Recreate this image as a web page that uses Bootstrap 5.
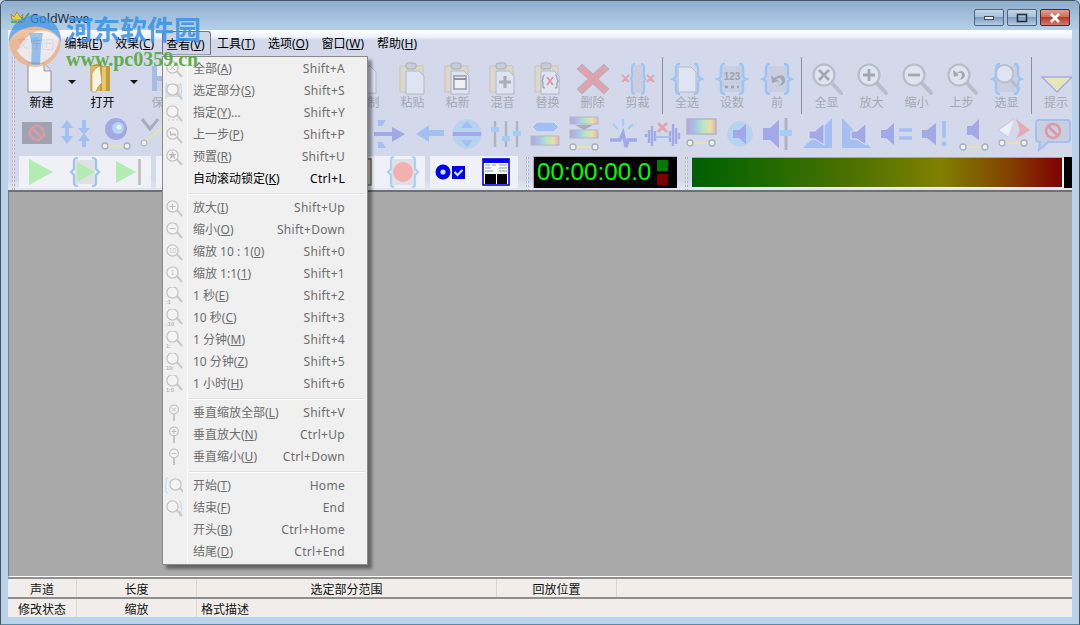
<!DOCTYPE html>
<html lang="zh-CN">
<head>
<meta charset="UTF-8" />
<title>GoldWave</title>
<link href="https://cdn.jsdelivr.net/npm/bootstrap@5.3.0/dist/css/bootstrap.min.css" rel="stylesheet" />
<style>
  html, body { width: 1080px; height: 625px; overflow: hidden; background: #b9d3ec; }
  body { font: 12px/16px "Noto Sans", "Noto Sans CJK SC", sans-serif; color: #000; }
  .gw-window { width: 1080px; height: 625px; padding: 0 7px 7px 7px; border: 1px solid #47535f; border-bottom-color: #5b8aa0; border-radius: 6px 6px 0 0; background: #b9d3ec; box-sizing: border-box; margin: 0; }
  .gw-title { height: 29px; flex: none; color: #1d2f40; font-size: 12.5px; background: linear-gradient(#8fadcd, #b5d0e9); margin: 0 -7px; padding: 5px 9px 0 9px; border-radius: 5px 5px 0 0; }
  .gw-title-text { padding-top: 5px; }
  .gw-winbtn { width: 30px; height: 17px; margin: 3px 0 0 3px; border: 1px solid #4e6478; border-radius: 2px; background: linear-gradient(#c3d6e9 0, #a9c1da 45%, #7d9dbd 50%, #b5cde4 100%); }
  .gw-close { background: linear-gradient(#e0a093 0, #cf6d5e 45%, #b63a2a 50%, #d37a68 100%); border-color: #4f2a2a; }
  .gw-client { background: #d3d9eb; min-height: 0; }
  .gw-menubar { height: 26px; flex: none; padding-left: 2.5px; background: linear-gradient(#fff 0, #eef1f8 28%, #d3d9eb 38%); }
  .gw-menubar span { padding: 5px 6.5px 0; height: 24px; margin-top: 1px; line-height: 16px; white-space: nowrap; }
  .gw-menubar .gw-dim { color: #9b9b9b; padding-right: 3.5px; }
  .gw-menubar .gw-open { margin: 1px 0 0 1.5px; padding: 5px 5px 0 3px; border: 1px solid #6f7480; border-bottom-color: #9a9ea8; border-radius: 3px 3px 0 0; background: #cfd5e6; }
  .gw-grip { flex: none; width: 3px; margin: 0 4px 0 4px; align-self: stretch; background: radial-gradient(circle, #fff 0.9px, #8e94a3 1.2px, transparent 1.5px) 0 0 / 3px 4px repeat-y; }
  .gw-grip-time { margin: 1px 4px 0 8px; }
  .gw-row1 { height: 59px; flex: none; overflow: hidden; }
  .gw-tool { flex: none; width: 45px; padding-top: 5px; text-align: center; color: #a6a8b2; white-space: nowrap; }
  .gw-tool svg { display: block; width: 36px; height: 36px; margin: 0 auto; }
  .gw-tool div { margin-top: -2px; }
  .gw-tool.gw-on { color: #000; }
  .gw-drop { flex: none; width: 16px; padding: 24px 0 0 4px; }
  .gw-drop-b { padding-left: 5px; }
  .gw-drop i { display: block; width: 0; border: 4px solid transparent; border-top: 4px solid #111; }
  .gw-sep { flex: none; width: 1px; height: 57px; margin: 1px 1.75px; background: #8b8f99; }
  .gw-gap-edit { flex: none; width: 159px; }
  .gw-row2 { height: 40px; flex: none; }
  .gw-row2 svg { flex: none; width: 39px; height: 36px; margin-top: 1px; }
  .gw-gap195 { flex: none; width: 195px; }
  .gw-row3 { height: 35px; flex: none; background: linear-gradient(#d3d9eb 70%, #e4e8f3); }
  .gw-panel { height: 32px; margin-top: 1px; background: #eff1f6; flex: none; }
  .gw-panel svg { flex: none; width: 44px; height: 32px; }
  .gw-p1 { width: 132px; } .gw-p2 { width: 269px; margin-left: 5px; } .gw-p3 { width: 88px; margin-left: 5px; }
  .gw-time { flex: none; width: 144px; height: 32px; margin-top: 1px; background: #000; border: 1px solid #a8a8a8; border-width: 1px 0 0 1px; color: #0f0; font: 24.2px/30px "Liberation Sans", sans-serif; padding: 0 9px 0 3px; }
  .gw-lamp { width: 11px; height: 11px; margin-top: 3px; background: #007b00; }
  .gw-lamp-r { background: #7b0000; }
  .gw-meter { flex: none; width: 372px; height: 31px; margin-top: 2px; background: linear-gradient(90deg, #005f00 0, #1f6a00 20%, #4f7200 45%, #808000 67%, #824400 85%, #800000 100%); border: 1px solid #a8a8a8; border-width: 1px 1px 1px 0; border-right: 2px solid #fff; border-bottom-color: #fff; }
  .gw-tail { flex: 1 1 auto; height: 31px; margin-top: 2px; background: #000; }
  .gw-work { background: #a9a9a9; border-top: 2px solid #6f7075; border-left: 1px solid #7c7f84; border-bottom: 1px solid #fff; min-height: 0; }
  .gw-status { flex: none; background: #f0edeb; color: #111; }
  .gw-status > div { height: 18px; border-top: 2px solid #8f8f8f; box-sizing: content-box; overflow: hidden; }
  .gw-status span { flex: none; height: 18px; padding-top: 5px; line-height: 12px; border-right: 1px solid #d9d6d4; white-space: nowrap; }
  .gw-s1 { width: 69px; } .gw-s2 { width: 120px; } .gw-s3 { width: 300px; } .gw-s4 { width: 120px; }
  .gw-menu { position: absolute; left: 161px; top: 55px; width: 206px; height: 509px; padding: 1px 0 0; background: #f0f0f0; border: 1px solid #8a8a8a; border-radius: 0; box-shadow: 4px 4px 3px rgba(0,0,0,.4); z-index: 5; display: block; min-width: 0; font-size: 12px; }
  .gw-menu::before { content: ""; position: absolute; left: 24px; top: 0; bottom: 0; width: 1px; background: #e2e3e3; border-right: 1px solid #fff; }
  .gw-menu .dropdown-item { display: flex; height: 22px; align-items: center; padding: 0 22px 0 30px; color: #6d6d6d; position: relative; font-size: 12px; background: none; }
  .gw-menu .dropdown-item.gw-on { color: #000; }
  .gw-menu .dropdown-item > span:last-child { letter-spacing: .3px; }
  .gw-menu .dropdown-item svg { position: absolute; left: 2px; top: 2px; width: 18px; height: 18px; }
  .gw-menu .dropdown-divider { margin: 3px 2px 2px 26px; height: 2px; border-top: 1px solid #e0e0e0; border-bottom: 1px solid #fff; opacity: 1; }
  .gw-mark { position: absolute; left: 0; top: 0; z-index: 9; pointer-events: none; }
  .gw-mark-logo { position: absolute; left: 6px; top: 12px; opacity: .72; }
  .gw-mark-cn { position: absolute; left: 65px; top: 11px; font: 700 27px/34px "Noto Sans CJK SC", sans-serif; color: #3a94e6; opacity: .88; white-space: nowrap; }
  .gw-mark-en { position: absolute; left: 65px; top: 47px; font: 700 20px/22px "Liberation Serif", serif; color: #55a83a; opacity: .9; white-space: nowrap; }
</style>
</head>
<body>
<svg width="0" height="0" class="position-absolute">
  <defs>
    <symbol id="br" viewBox="0 0 36 36"><path d="M11 3Q7 3 7 7v7q0 3-3 4 3 1 3 4v7q0 4 4 4M25 3q4 0 4 4v7q0 3 3 4-3 1-3 4v7q0 4-4 4" fill="none" stroke="#9cc4f5" stroke-width="2.4"/></symbol>
    <symbol id="clip" viewBox="0 0 36 36"><rect x="5" y="5" width="23" height="26" fill="#dcd8cb" stroke="#c8c4b6"/><rect x="11" y="2" width="10" height="6" rx="2" fill="#c9ccd6" stroke="#a9adb8"/><path d="M11 10h13l5 5v18H11z" fill="#dfe4f2" stroke="#b4b8c6"/></symbol>
    <symbol id="mag" viewBox="0 0 36 36"><path d="M22 21l10 11" stroke="#b9bdc9" stroke-width="4" stroke-linecap="round"/><circle cx="15" cy="14" r="10.5" fill="#dfe4f1" stroke="#b9bdc9" stroke-width="2.2"/></symbol>
    <symbol id="mm" viewBox="0 0 18 18"><path d="M11 10l6 7" stroke="#c9c9c9" stroke-width="2"/><circle cx="7.5" cy="7.5" r="5.6" fill="#f4f4f4" stroke="#c4c4c4" stroke-width="1.3"/></symbol>
    <symbol id="mv" viewBox="0 0 18 18"><circle cx="9" cy="5.5" r="4.4" fill="#f4f4f4" stroke="#c4c4c4" stroke-width="1.3"/><path d="M9 10v7" stroke="#c4c4c4" stroke-width="2"/></symbol>
    <symbol id="link" viewBox="0 0 36 36"><path d="M9 31h18" stroke="#e4e3b0" stroke-width="2"/><circle cx="7" cy="31" r="3" fill="#eef0f6" stroke="#a9adb8" stroke-width="1.3"/><circle cx="29" cy="31" r="3" fill="#eef0f6" stroke="#a9adb8" stroke-width="1.3"/></symbol>
    <linearGradient id="rb" x1="0" x2="1" y1="0" y2="0"><stop offset="0" stop-color="#b4a6d8"/><stop offset=".3" stop-color="#a8c6ee"/><stop offset=".55" stop-color="#b8e6c0"/><stop offset=".8" stop-color="#e6e0a8"/><stop offset="1" stop-color="#e6b4a8"/></linearGradient>
  </defs>
</svg>

<div class="gw-window d-flex flex-column position-relative">
  <div class="gw-title d-flex align-items-start">
    <svg width="20" height="16" viewBox="0 0 20 16" class="mt-1 flex-none"><path d="M1 4l3 3 3-5 3 5 3-3-1 6H2z" fill="#e8d43a" stroke="#7b7320" stroke-width=".6"/><path d="M11 7l3 3 5-7" fill="none" stroke="#3f9a4a" stroke-width="1.6"/><path d="M1 12h6" stroke="#2fae36" stroke-width="1.6"/><path d="M8 12h5" stroke="#d9363a" stroke-width="1.6"/><path d="M14 12h5" stroke="#d9c23a" stroke-width="1.6"/></svg>
    <span class="flex-grow-1 gw-title-text">GoldWave</span>
    <div class="gw-winbtn d-flex align-items-center justify-content-center"><svg width="12" height="7" viewBox="0 0 12 7"><rect x="1.500" y="2.500" width="9" height="3" fill="#e9eef4" stroke="#3f4b58"/></svg></div>
    <div class="gw-winbtn d-flex align-items-center justify-content-center"><svg width="12" height="10" viewBox="0 0 12 10"><rect x="1.500" y="1.500" width="9" height="7" fill="none" stroke="#28313a" stroke-width="1.600"/></svg></div>
    <div class="gw-winbtn gw-close d-flex align-items-center justify-content-center"><svg width="12" height="10" viewBox="0 0 12 10"><path d="M2 1l8 8M10 1L2 9" stroke="#fff" stroke-width="2.600"/></svg></div>
  </div>

  <div class="gw-client d-flex flex-column flex-grow-1">
    <div class="gw-menubar d-flex">
      <span class="gw-dim">文件(<u>F</u>)</span>
      <span>编辑(<u>E</u>)</span>
      <span>效果(<u>C</u>)</span>
      <span class="gw-open">查看(<u>V</u>)</span>
      <span>工具(<u>T</u>)</span>
      <span>选项(<u>O</u>)</span>
      <span>窗口(<u>W</u>)</span>
      <span>帮助(<u>H</u>)</span>
    </div>

    <div class="gw-row1 d-flex">
      <div class="gw-grip"></div>
      <div class="gw-tool gw-on"><svg viewBox="0 0 36 36"><path d="M4 2h16l7 8v21H4z" fill="#f6f6f6" stroke="#8a8a8a"/><path d="M20 2v8h7" fill="#dcdcdc" stroke="#9a9a9a"/></svg><div>新建</div></div>
      <div class="gw-drop"><i></i></div>
      <div class="gw-tool gw-on"><svg viewBox="0 0 36 36"><path d="M5 5l10-3 3 3h7v25H12l-7 0z" fill="#c59a3c"/><path d="M5 5h10v25H5z" fill="#dcb45c"/><path d="M7 12q4-6 8-7l2 17q-4 2-6 9H7z" fill="#f8f4e2" stroke="#a08850" stroke-width=".6"/><path d="M17 6l4-1v24l-4 2z" fill="#e8c66a"/></svg><div>打开</div></div>
      <div class="gw-drop gw-drop-b"><i></i></div>
      <div class="gw-tool"><svg viewBox="0 0 36 36"><rect x="6" y="5" width="25" height="25" fill="#a8bce0"/><rect x="11" y="5" width="15" height="10" fill="#e8ecf6"/><rect x="11" y="20" width="15" height="10" fill="#c9d2e6"/></svg><div>保存</div></div>
      <div class="gw-gap-edit"></div>
      <div class="gw-tool"><svg viewBox="0 0 36 36"><path d="M6 5h14l6 6v21H6z" fill="#dfe4f2" stroke="#b4b8c6"/></svg><div>复制</div></div>
      <div class="gw-tool"><svg viewBox="0 0 36 36"><use href="#clip"/></svg><div>粘贴</div></div>
      <div class="gw-tool"><svg viewBox="0 0 36 36"><use href="#clip"/><rect x="14" y="15" width="12" height="13" fill="#eef0f6" stroke="#8e929c" stroke-width="1.3"/><path d="M14 18h12" stroke="#8e929c" stroke-width="2"/></svg><div>粘新</div></div>
      <div class="gw-tool"><svg viewBox="0 0 36 36"><use href="#clip"/><path d="M20 15v12M14 21h12" stroke="#a9adb4" stroke-width="3.2"/></svg><div>混音</div></div>
      <div class="gw-tool"><svg viewBox="0 0 36 36"><use href="#clip"/><path d="M17 16l6 8M23 16l-6 8" stroke="#dd9aa4" stroke-width="2"/><path d="M15 14q-2 0-2 2v2l-1 2 1 2v3q0 2 2 2M25 14q2 0 2 2v2l1 2-1 2v3q0 2-2 2" fill="none" stroke="#9a9ea8" stroke-width="1.2"/></svg><div>替换</div></div>
      <div class="gw-tool"><svg viewBox="0 0 36 36"><path d="M7 3l11 10L29 3l5 5-11 10 11 10-5 5-11-10L7 33l-5-5 11-10L2 8z" fill="#dba4ae" stroke="#b8b4bc"/></svg><div>删除</div></div>
      <div class="gw-tool"><svg viewBox="0 0 36 36"><rect x="12" y="4" width="12" height="28" fill="#c9cfe0"/><path d="M15 3q-3 0-3 3v9l-1 3 1 3v9q0 3 3 3M21 3q3 0 3 3v9l1 3-1 3v9q0 3-3 3" fill="none" stroke="#9cc4f5" stroke-width="2.2"/><path d="M2 14l7 7M9 14l-7 7M27 14l7 7M34 14l-7 7" stroke="#e0a6b0" stroke-width="2.2"/></svg><div>剪裁</div></div>
      <div class="gw-sep"></div>
      <div class="gw-tool"><svg viewBox="0 0 36 36"><path d="M9 6h13l5 5v20H9z" fill="#dfe4f2" stroke="#b4b8c6"/><use href="#br"/></svg><div>全选</div></div>
      <div class="gw-tool"><svg viewBox="0 0 36 36"><rect x="8" y="5" width="20" height="26" fill="#c9cfe0"/><use href="#br"/><text x="18" y="19" text-anchor="middle" font-size="10" font-weight="700" fill="#9ea2ae" font-family="Liberation Sans">123</text><path d="M11 26h3M17 26h3M23 26h2" stroke="#9ea2ae" stroke-width="2.4"/></svg><div>设数</div></div>
      <div class="gw-tool"><svg viewBox="0 0 36 36"><rect x="8" y="5" width="20" height="26" fill="#c9cfe0"/><use href="#br"/><path d="M12 14l1 8 7-2-3-2q5-3 6 2 0 3-4 5 8-1 7-7-2-7-11-1z" fill="#a3a7b2"/></svg><div>前</div></div>
      <div class="gw-sep"></div>
      <div class="gw-tool"><svg viewBox="0 0 36 36"><use href="#mag"/><path d="M10 9l10 10M20 9L10 19" stroke="#a3a7b2" stroke-width="2.6"/></svg><div>全显</div></div>
      <div class="gw-tool"><svg viewBox="0 0 36 36"><use href="#mag"/><path d="M15 8v12M9 14h12" stroke="#a3a7b2" stroke-width="2.8"/></svg><div>放大</div></div>
      <div class="gw-tool"><svg viewBox="0 0 36 36"><use href="#mag"/><path d="M9 14h12" stroke="#a3a7b2" stroke-width="2.8"/></svg><div>缩小</div></div>
      <div class="gw-tool"><svg viewBox="0 0 36 36"><use href="#mag"/><path d="M9 9l1 7 5-2-2-1q4-3 5 1 0 3-3 5 6-1 6-5-2-7-8-2z" fill="#a3a7b2"/></svg><div>上步</div></div>
      <div class="gw-tool"><svg viewBox="0 0 36 36"><rect x="8" y="5" width="20" height="26" fill="#c9cfe0"/><use href="#mag" x="3" y="1" width="30" height="30"/><use href="#br"/></svg><div>选显</div></div>
      <div class="gw-sep"></div>
      <div class="gw-tool"><svg viewBox="0 0 36 36"><path d="M4 16h30L19 31z" fill="#e6e6b8" stroke="#a8ace8" stroke-width="1.5"/></svg><div>提示</div></div>
    </div>

    <div class="gw-row2 d-flex">
      <div class="gw-grip"></div>
      <svg viewBox="0 0 39 36"><rect x="3" y="6" width="30" height="22" fill="#a0a4b0"/><circle cx="18" cy="17" r="7" fill="none" stroke="#d99aa4" stroke-width="2.6"/><path d="M13 12l10 10" stroke="#d99aa4" stroke-width="2.6"/></svg>
      <svg viewBox="0 0 39 36"><path d="M9 4l-6 8h4v8H3l6 8 6-8h-4v-8h4zM24 4v8h-4l6 7 6-7h-4V4zM26 17l-6 8h4v6h4v-6h4z" fill="#a4c0f3"/></svg>
      <svg viewBox="0 0 39 36"><circle cx="19" cy="13" r="11" fill="#a3a8e6"/><circle cx="21" cy="12" r="6" fill="#b4d4f0"/><circle cx="22" cy="11" r="2.600" fill="#e6eefa"/><use href="#link" x="1" y="-1" width="36" height="36"/></svg>
      <svg viewBox="0 0 39 36"><path d="M6 3l8 10 8-10" fill="none" stroke="#a9adb8" stroke-width="3"/><path d="M8 27L32 6" stroke="#e4e3b0" stroke-width="2"/><circle cx="8" cy="27" r="3" fill="#eef0f6" stroke="#a9adb8"/></svg>
      <div class="gw-gap195"></div>
      <svg viewBox="0 0 39 36"><path d="M8 4h8l-4 6h-4zM8 32h8l-4-6h-4z" fill="#a4c0f3"/><path d="M4 16h18v-5l13 7-13 8v-6H4z" fill="#a3a8e6"/></svg>
      <svg viewBox="0 0 39 36"><path d="M35 14H20V9L7 18l13 8v-6h15z" fill="#a4c0f3"/></svg>
      <svg viewBox="0 0 39 36"><circle cx="19" cy="18" r="14.500" fill="#b4d4f0" stroke="#c8cfe6"/><path d="M5 16h28v4H5z" fill="#a3a8e6"/><path d="M19 5l-6 7h12zM19 31l-6-7h12z" fill="#a4c0f3"/></svg>
      <svg viewBox="0 0 39 36"><path d="M8 5v26M19 5v26M30 5v26" stroke="#b0b4c0" stroke-width="2.400"/><rect x="4" y="11" width="8" height="5" fill="#a4cef3"/><rect x="15" y="20" width="8" height="5" fill="#a4cef3"/><rect x="26" y="15" width="8" height="5" fill="#a4cef3"/></svg>
      <svg viewBox="0 0 39 36"><path d="M11 6h17l5 5-5 5H11l-5-5z" fill="#a4c0f3" stroke="#dfe4f2"/><rect x="5" y="20" width="28" height="9" fill="url(#rb)" stroke="#b4b8c6"/></svg>
      <svg viewBox="0 0 39 36"><rect x="5" y="1" width="28" height="7" fill="url(#rb)" stroke="#b4b8c6"/><path d="M10 9h18l-9 5z" fill="#a9adb8"/><rect x="5" y="14" width="28" height="8" fill="url(#rb)" stroke="#b4b8c6"/><use href="#link" x="1" y="0" width="36" height="36"/></svg>
      <svg viewBox="0 0 39 36"><path d="M6 24h10l3-7 3 14 2-7h9" fill="none" stroke="#a3a8e6" stroke-width="3.400"/><path d="M19 3v7M9 8l5 5M29 8l-5 5" stroke="#a4cef3" stroke-width="2.400"/></svg>
      <svg viewBox="0 0 39 36"><path d="M3 21v-3M6 27V14M9 30V10M12 25V15M27 26V15M30 30V8M33 28V12M36 23v-6" stroke="#a3a8e6" stroke-width="2.400"/><path d="M12 21h16" stroke="#a4c0f3" stroke-width="2"/><path d="M15 7l9 9M24 7l-9 9" stroke="#e0a6b0" stroke-width="2.800"/></svg>
      <svg viewBox="0 0 39 36"><rect x="5" y="3" width="29" height="15" fill="url(#rb)" stroke="#b0b4c0" stroke-width="1.400"/><use href="#link" x="1" y="-4" width="36" height="36"/></svg>
      <svg viewBox="0 0 39 36"><circle cx="19" cy="18" r="12.500" fill="#b4d4f0" stroke="#c8cfe6"/><path d="M12 14h6l7-6v20l-7-6h-6z" fill="#a3a8e6"/></svg>
      <svg viewBox="0 0 39 36"><path d="M3 12h7l9-8v28l-9-8H3z" fill="#a3a8e6"/><path d="M26 2v32" stroke="#b0b4c0" stroke-width="3"/><rect x="20" y="14" width="12" height="6" fill="#a4cef3"/></svg>
      <svg viewBox="0 0 39 36"><path d="M33 2v30H4z" fill="#a4c0f3"/><path d="M10 15h6l9-8v22l-9-6h-6z" fill="#a3a8e6" stroke="#dfe4f2"/></svg>
      <svg viewBox="0 0 39 36"><path d="M4 2v30h29z" fill="#a4c0f3"/><path d="M13 15h6l9-8v22l-9-6h-6z" fill="#a3a8e6" stroke="#dfe4f2"/></svg>
      <svg viewBox="0 0 39 36"><path d="M4 14h5l8-7v22l-8-7H4z" fill="#a3a8e6"/><path d="M22 14h13M22 22h13" stroke="#a4c0f3" stroke-width="3.400"/></svg>
      <svg viewBox="0 0 39 36"><path d="M6 14h5l9-7v22l-9-7H6z" fill="#a3a8e6"/><path d="M28 5v17" stroke="#a4c0f3" stroke-width="3.600"/><circle cx="28" cy="28" r="2.400" fill="#a4c0f3"/></svg>
      <svg viewBox="0 0 39 36"><path d="M12 10h5l7-7v21l-7-5h-5z" fill="#a3a8e6"/><use href="#link" x="1" y="0" width="36" height="36"/></svg>
      <svg viewBox="0 0 39 36"><path d="M20 3L4 14l10 7" fill="#eef0f6" stroke="#c9cedd" stroke-width="1.400"/><path d="M22 3l14 11-14 9 4-9z" fill="#e8aab2"/><use href="#link" x="1" y="-4" width="36" height="36"/></svg>
      <svg viewBox="0 0 39 36"><path d="M6 4h28q3 0 3 3v16q0 3-3 3H15l-9 8 1-8q-4 0-4-3V7q0-3 3-3z" fill="#c9cfe0" stroke="#a4c0f3" stroke-width="2"/><circle cx="20" cy="15" r="7" fill="none" stroke="#dd9aa4" stroke-width="2.600"/><path d="M15 10l10 10" stroke="#dd9aa4" stroke-width="2.600"/></svg>
    </div>

    <div class="gw-row3 d-flex">
      <div class="gw-grip"></div>
      <div class="gw-panel gw-p1 d-flex">
        <svg viewBox="0 0 44 32"><path d="M10 3l24 13-24 13z" fill="#b3ecb3"/></svg>
        <svg viewBox="0 0 44 32"><rect x="12" y="4" width="20" height="24" fill="#dfe0e6"/><path d="M15 2q-4 0-4 3v8l-3 3 3 3v8q0 3 4 3M29 2q4 0 4 3v8l3 3-3 3v8q0 3-4 3" fill="none" stroke="#9cc4f5" stroke-width="2.200"/><path d="M14 6l18 10-18 10z" fill="#b3ecb3"/></svg>
        <svg viewBox="0 0 44 32"><path d="M9 5l20 11-20 11z" fill="#b3ecb3"/><rect x="31" y="3" width="3" height="26" fill="#c4c4c4"/></svg>
      </div>
      <div class="gw-panel gw-p2 d-flex justify-content-end">
        <svg viewBox="0 0 44 32"><rect x="22" y="3" width="12" height="26" fill="#dcd8cb" stroke="#5f5f5f" stroke-width="1.200"/></svg>
        <svg viewBox="0 0 44 32"><rect x="10" y="3" width="24" height="26" fill="#dfe0e6"/><path d="M13 1q-3 0-3 3v9l-3 3 3 3v9q0 3 3 3M31 1q3 0 3 3v9l3 3-3 3v9q0 3-3 3" fill="none" stroke="#a9d0f5" stroke-width="2.200"/><circle cx="22" cy="16" r="10" fill="#f2b0b0"/></svg>
      </div>
      <div class="gw-panel gw-p3 d-flex">
        <svg viewBox="0 0 44 32"><circle cx="13" cy="16" r="7.500" fill="#0000ee"/><circle cx="13" cy="16" r="2.600" fill="#cfe0ff"/><rect x="22" y="10" width="13" height="13" fill="#0000ee"/><path d="M24.500 16l3 3 5-5" fill="none" stroke="#dfe8ff" stroke-width="2"/></svg>
        <svg viewBox="0 0 44 32"><rect x="9" y="3" width="26" height="26" fill="#fff" stroke="#0000ee" stroke-width="1.600"/><rect x="9" y="3" width="26" height="4" fill="#0000ee"/><path d="M11 9h5M18 9h4M25 9h8M11 12h6M25 12h8M11 15h8M25 15h8" stroke="#6a8" stroke-width="1.200"/><rect x="11" y="18" width="11" height="10" fill="#000"/><rect x="23" y="18" width="10" height="10" fill="#000"/></svg>
      </div>
      <div class="gw-grip gw-grip-time"></div>
      <div class="gw-time d-flex justify-content-between">
        <span>00:00:00.0</span>
        <div><div class="gw-lamp"></div><div class="gw-lamp gw-lamp-r"></div></div>
      </div>
      <div class="gw-grip gw-grip-time"></div>
      <div class="gw-meter"></div>
      <div class="gw-tail"></div>
    </div>

    <div class="gw-work flex-grow-1"></div>

    <div class="gw-status">
      <div class="d-flex text-center">
        <span class="gw-s1">声道</span><span class="gw-s2">长度</span><span class="gw-s3">选定部分范围</span><span class="gw-s4">回放位置</span>
      </div>
      <div class="d-flex text-center">
        <span class="gw-s1">修改状态</span><span class="gw-s2">缩放</span><span class="gw-s3 text-start ps-1 border-0">格式描述</span>
      </div>
    </div>
  </div>

  <div class="gw-menu dropdown-menu show">
    <a class="dropdown-item justify-content-between"><svg><use href="#mm"/><path d="M5 5l5 5M10 5l-5 5" stroke="#bcbcbc"/></svg><span>全部(<u>A</u>)</span><span>Shift+A</span></a>
    <a class="dropdown-item justify-content-between"><svg><rect x="2" y="2" width="13" height="13" fill="#dcdcdc"/><use href="#mm"/><path d="M2 1q-1 0-1 2v4l-1 2 1 2v4q0 2 1 2M15 1q1 0 1 2v4l1 2-1 2v4q0 2-1 2" fill="none" stroke="#b9d4f2"/></svg><span>选定部分(<u>S</u>)</span><span>Shift+S</span></a>
    <a class="dropdown-item justify-content-between"><svg><use href="#mm"/><path d="M3 16h2M7 16h2M11 16h2" stroke="#c4c4c4"/></svg><span>指定(<u>Y</u>)...</span><span>Shift+Y</span></a>
    <a class="dropdown-item justify-content-between"><svg><use href="#mm"/><path d="M5 5l1 4 3-1q2 0 1 2" fill="none" stroke="#bcbcbc" stroke-width="1.400"/></svg><span>上一步(<u>P</u>)</span><span>Shift+P</span></a>
    <a class="dropdown-item justify-content-between"><svg><use href="#mm"/><path d="M7.500 3l1.200 3h3l-2.400 2 1 3-2.800-1.800L4.700 11l1-3L3.300 6h3z" fill="#bcbcbc"/></svg><span>预置(<u>R</u>)</span><span>Shift+U</span></a>
    <a class="dropdown-item justify-content-between gw-on"><span>自动滚动锁定(<u>K</u>)</span><span>Ctrl+L</span></a>
    <div class="dropdown-divider"></div>
    <a class="dropdown-item justify-content-between"><svg><use href="#mm"/><path d="M7.500 4.500v6M4.500 7.500h6" stroke="#bcbcbc"/></svg><span>放大(<u>I</u>)</span><span>Shift+Up</span></a>
    <a class="dropdown-item justify-content-between"><svg><use href="#mm"/><path d="M4.500 7.500h6" stroke="#bcbcbc"/></svg><span>缩小(<u>O</u>)</span><span>Shift+Down</span></a>
    <a class="dropdown-item justify-content-between"><svg><use href="#mm"/><text x="7.500" y="10" font-size="6.500" text-anchor="middle" fill="#bcbcbc" font-family="Liberation Sans">10</text></svg><span>缩放 10 : 1(<u>0</u>)</span><span>Shift+0</span></a>
    <a class="dropdown-item justify-content-between"><svg><use href="#mm"/><text x="7.500" y="10" font-size="6.500" text-anchor="middle" fill="#bcbcbc" font-family="Liberation Sans">1</text></svg><span>缩放 1:1(<u>1</u>)</span><span>Shift+1</span></a>
    <a class="dropdown-item justify-content-between"><svg><use href="#mm" y="-2"/><text x="1" y="17" font-size="5.500" fill="#b4b4b4" font-family="Liberation Sans" font-weight="700">:1</text></svg><span>1 秒(<u>E</u>)</span><span>Shift+2</span></a>
    <a class="dropdown-item justify-content-between"><svg><use href="#mm" y="-2"/><text x="1" y="17" font-size="5.500" fill="#b4b4b4" font-family="Liberation Sans" font-weight="700">:10</text></svg><span>10 秒(<u>C</u>)</span><span>Shift+3</span></a>
    <a class="dropdown-item justify-content-between"><svg><use href="#mm" y="-2"/><text x="1" y="17" font-size="5.500" fill="#b4b4b4" font-family="Liberation Sans" font-weight="700">1:</text></svg><span>1 分钟(<u>M</u>)</span><span>Shift+4</span></a>
    <a class="dropdown-item justify-content-between"><svg><use href="#mm" y="-2"/><text x="1" y="17" font-size="5.500" fill="#b4b4b4" font-family="Liberation Sans" font-weight="700">10:</text></svg><span>10 分钟(<u>Z</u>)</span><span>Shift+5</span></a>
    <a class="dropdown-item justify-content-between"><svg><use href="#mm" y="-2"/><text x="1" y="17" font-size="5.500" fill="#b4b4b4" font-family="Liberation Sans" font-weight="700">1:0</text></svg><span>1 小时(<u>H</u>)</span><span>Shift+6</span></a>
    <div class="dropdown-divider"></div>
    <a class="dropdown-item justify-content-between"><svg><use href="#mv"/><path d="M7 3.500l4 4M11 3.500l-4 4" stroke="#bcbcbc"/></svg><span>垂直缩放全部(<u>L</u>)</span><span>Shift+V</span></a>
    <a class="dropdown-item justify-content-between"><svg><use href="#mv"/><path d="M9 3v5M6.500 5.500h5" stroke="#bcbcbc"/></svg><span>垂直放大(<u>N</u>)</span><span>Ctrl+Up</span></a>
    <a class="dropdown-item justify-content-between"><svg><use href="#mv"/><path d="M6.500 5.500h5" stroke="#bcbcbc"/></svg><span>垂直缩小(<u>U</u>)</span><span>Ctrl+Down</span></a>
    <div class="dropdown-divider"></div>
    <a class="dropdown-item justify-content-between"><svg><use href="#mm" x="3"/><path d="M3 1q-2 0-2 2v4l-1 2 1 2v3q0 2 2 2" fill="none" stroke="#b9d4f2"/></svg><span>开始(<u>T</u>)</span><span>Home</span></a>
    <a class="dropdown-item justify-content-between"><svg><use href="#mm"/><path d="M14 2q2 0 2 2v4l1 2-1 2v3q0 2-2 2" fill="none" stroke="#b9d4f2"/></svg><span>结束(<u>F</u>)</span><span>End</span></a>
    <a class="dropdown-item justify-content-between"><span>开头(<u>B</u>)</span><span>Ctrl+Home</span></a>
    <a class="dropdown-item justify-content-between"><span>结尾(<u>D</u>)</span><span>Ctrl+End</span></a>
  </div>

  <div class="gw-mark">
    <svg width="66" height="70" viewBox="0 0 66 70" class="gw-mark-logo"><circle cx="28" cy="28" r="26" fill="#f0ad7c"/><path d="M2 28a26 26 0 0 1 52 0q-4-8-14-12-12-5-24 0Q6 20 2 28z" fill="#3a94e6"/><path d="M10 38q8-16 20-20 14-2 22 8-3 18-18 24-14 2-24-12z" fill="#f4f1ee"/><path d="M22 20h14l-2 12-1 20h-9l1-20z" fill="#3a94e6" opacity=".65"/></svg>
    <div class="gw-mark-cn">河东软件园</div>
    <div class="gw-mark-en">www.pc0359.cn</div>
  </div>
</div>
<script src="https://cdn.jsdelivr.net/npm/bootstrap@5.3.0/dist/js/bootstrap.bundle.min.js"></script>
</body>
</html>
